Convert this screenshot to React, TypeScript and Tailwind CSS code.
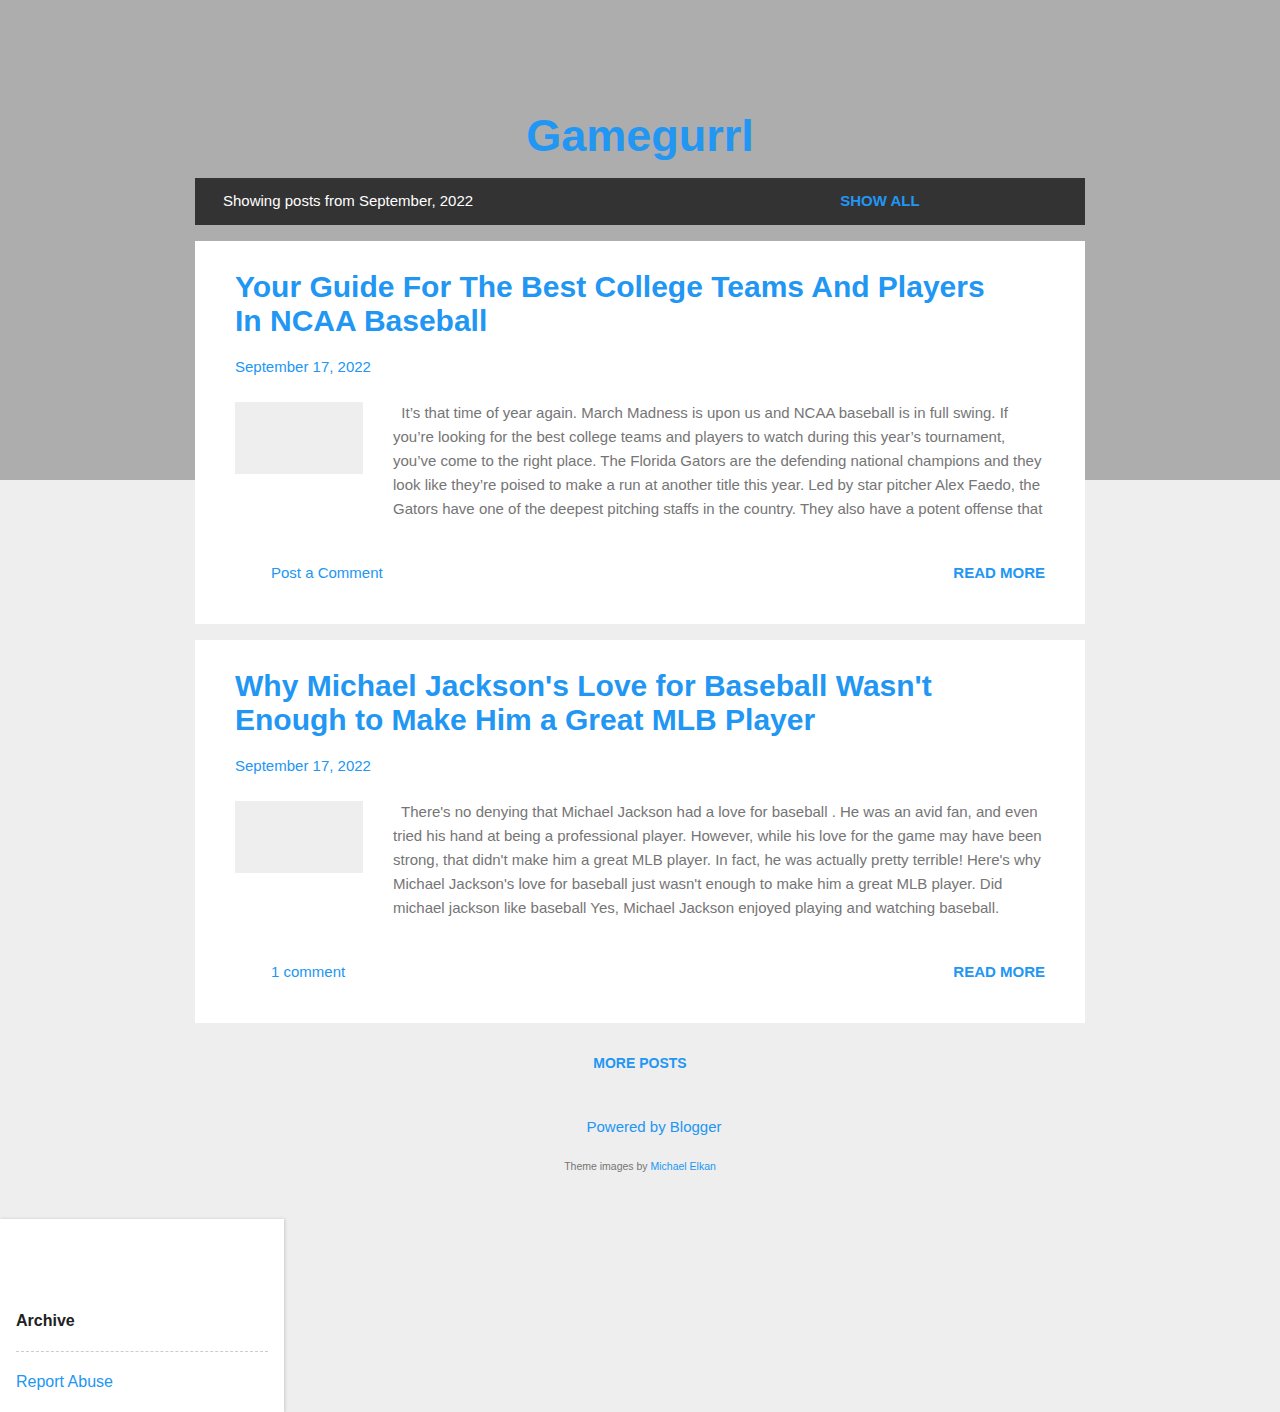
const posts = [
  {
    title: "Your Guide For The Best College Teams And Players In NCAA Baseball",
    date: "September 17, 2022",
    snippet:
      "\u00a0 It\u2019s that time of year again. March Madness is upon us and NCAA baseball is in full swing. If you\u2019re looking for the best college teams and players to watch during this year\u2019s tournament, you\u2019ve come to the right place. The Florida Gators are the defending national champions and they look like they\u2019re poised to make a run at another title this year. Led by star pitcher Alex Faedo, the Gators have one of the deepest pitching staffs in the country. They also have a potent offense that",
    comments: "Post a Comment",
  },
  {
    title:
      "Why Michael Jackson's Love for Baseball Wasn't Enough to Make Him a Great MLB Player",
    date: "September 17, 2022",
    snippet:
      "\u00a0 There's no denying that Michael Jackson had a love for baseball . He was an avid fan, and even tried his hand at being a professional player. However, while his love for the game may have been strong, that didn't make him a great MLB player. In fact, he was actually pretty terrible! Here's why Michael Jackson's love for baseball just wasn't enough to make him a great MLB player. Did michael jackson like baseball Yes, Michael Jackson enjoyed playing and watching baseball.",
    comments: "1 comment",
  },
];

function PostCard({
  title,
  date,
  snippet,
  comments,
}: {
  title: string;
  date: string;
  snippet: string;
  comments: string;
}) {
  return (
    <article className="bg-white px-10 pt-[29px] pb-[42px]">
      <h3 className="max-w-[760px] text-[30px] leading-[34px] font-bold text-[#2196f3]">
        {title}
      </h3>
      <div className="mt-[20px] text-[15px] leading-[18px] text-[#2196f3]">
        {date}
      </div>
      <div className="mt-[25px] flex gap-[30px]">
        <div className="mt-[1px] h-[72px] w-[128px] shrink-0 bg-[#eeeeee]" />
        <p className="h-[120px] text-[15px] leading-[24px] text-[#757575]">
          {snippet}
        </p>
      </div>
      <div className="mt-[43px] flex items-center justify-between text-[15px] leading-[18px]">
        <a className="pl-9 text-[#2196f3]">{comments}</a>
        <a className="font-bold text-[#2196f3] uppercase">Read more</a>
      </div>
    </article>
  );
}

export default function App() {
  return (
    <div className="min-h-[1412px] bg-[linear-gradient(#adadad_0,#adadad_480px,#eeeeee_480px)] font-['Liberation_Sans',Arial,sans-serif]">
      <header className="pt-[110px] text-center">
        <h1 className="text-[45px] leading-[52px] font-bold text-[#2196f3]">
          Gamegurrl
        </h1>
      </header>
      <main className="mx-auto mt-[16px] w-[890px]">
        <div className="flex h-[47px] items-center bg-[#333333] pl-7 text-[15px]">
          <span className="text-white">Showing posts from September, 2022</span>
          <a className="ml-[367px] font-bold text-[#2196f3] uppercase">
            Show all
          </a>
        </div>
        <div className="mt-4 flex flex-col gap-4">
          {posts.map((post) => (
            <PostCard key={post.title} {...post} />
          ))}
        </div>
        <div className="pt-[32px] text-center text-[14px] leading-[16px] font-bold text-[#2196f3] uppercase">
          More posts
        </div>
      </main>
      <footer className="pt-[47px] text-center">
        <div className="text-[15px] leading-[18px] text-[#2196f3]">
          <span className="pl-[28px]">Powered by Blogger</span>
        </div>
        <div className="mt-[24px] text-[10.5px] leading-[13px] text-[#757575]">
          Theme images by <a className="text-[#2196f3]">Michael Elkan</a>
        </div>
      </footer>
      <aside className="mt-[46px] h-[193px] w-[284px] bg-white px-4 pt-[92px] shadow-[1px_0_3px_rgba(0,0,0,0.15)]">
        <h3 className="text-[16px] leading-[20px] font-bold text-[#212121]">
          Archive
        </h3>
        <div className="mt-[20px] border-t border-dashed border-[#cccccc]" />
        <a className="mt-[20px] block text-[16px] leading-[20px] text-[#2196f3]">
          Report Abuse
        </a>
      </aside>
    </div>
  );
}
